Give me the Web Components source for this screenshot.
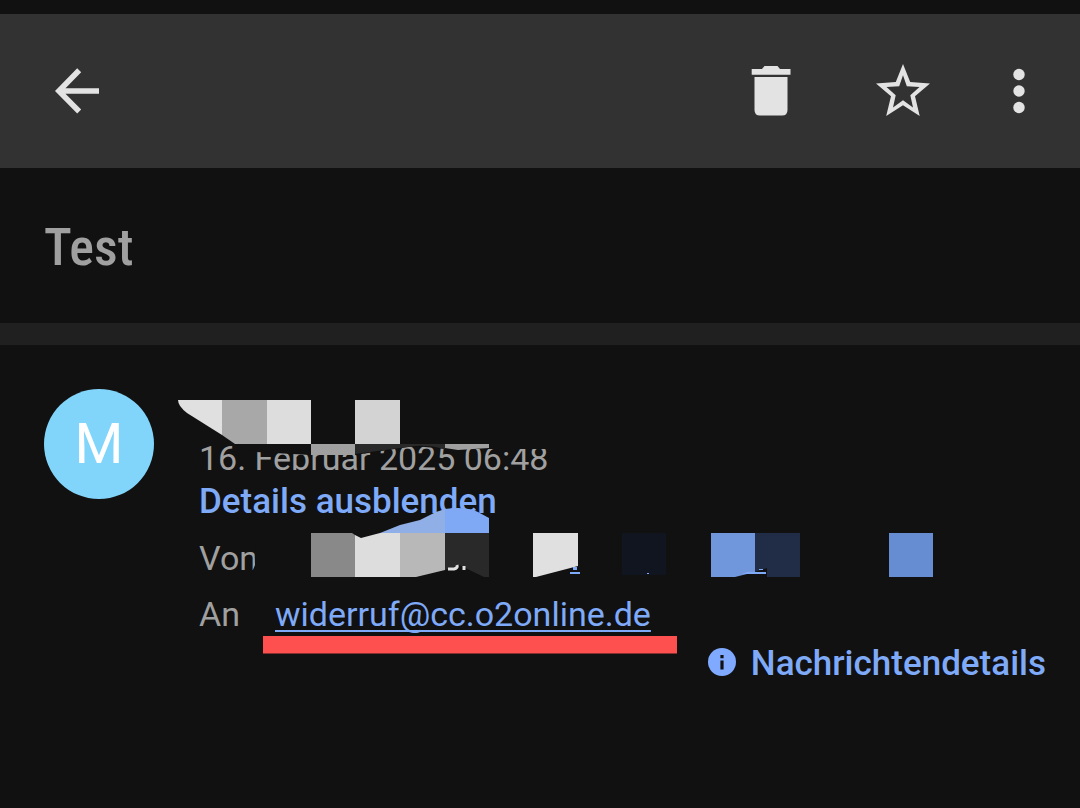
<!DOCTYPE html>
<html lang="de">
<head>
<meta charset="utf-8">
<meta name="viewport" content="width=device-width, initial-scale=1">
<title>Test</title>
<style>
body { margin: 0; background: #111; color: #a0a0a0; font-family: Roboto, "Liberation Sans", sans-serif; }
</style>
</head>
<body>
<mail-page>
  <mail-toolbar slot="bar"></mail-toolbar>
  <mail-subject slot="subject">Test</mail-subject>
  <mail-message initial="M">
    <span slot="date">16. Februar 2025 06:48</span>
    <a slot="to" href="mailto:widerruf@cc.o2online.de">widerruf@cc.o2online.de</a>
  </mail-message>
</mail-page>
<script>
const define = (name, html) => customElements.define(name, class extends HTMLElement {
  constructor() {
    super();
    this.attachShadow({ mode: 'open' }).innerHTML = html;
  }
  connectedCallback() {
    const initial = this.shadowRoot.querySelector('.initial');
    if (initial) initial.textContent = this.getAttribute('initial');
  }
});

define('mail-page', `
<style>
:host { display: flex; flex-direction: column; min-height: 100vh; padding-top: 14px; box-sizing: border-box; background: #111; }
main { display: block; }
</style>
<slot name="bar"></slot>
<main><slot name="subject"></slot><slot></slot></main>`);

define('mail-toolbar', `
<style>
:host { display: block; background: #323232; }
header { display: flex; align-items: center; height: 154px; padding: 0 29px 0 45px; }
button { width: 64px; height: 64px; padding: 0; border: 0; background: none; color: #e3e3e3; display: grid; place-items: center; }
svg { width: 64px; height: 64px; fill: currentColor; display: block; }
nav { display: flex; align-items: center; gap: 68px; margin-left: auto; }
nav button:last-child { margin-left: -16px; }
</style>
<header>
  <button aria-label="Zurück"><svg viewBox="0 0 64 64"><path d="M54 29.200H20.500L36.200 13.300 32.200 9.300 10 32 32.200 54.500 36.200 50.500 20.500 34.800H54Z"/></svg></button>
  <nav>
    <button aria-label="Löschen"><svg viewBox="0 0 64 64"><path d="M12.700 10H23L25.500 7H38.500L41 10H51.500V15.800H12.700ZM15.500 18H48.500V51Q48.500 56.500 43 56.500H21Q15.500 56.500 15.500 51Z"/></svg></button>
    <button aria-label="Markieren"><svg viewBox="0 0 64 64"><path fill-rule="evenodd" d="M32 5 39.200 23 59 24.500 44 37.300 48.700 57 32 46.300 15.200 57 20 37.300 5 24.500 24.800 23ZM32 16.200 28.200 27.200 15.500 28 24.700 36.300 22 48.600 32 41.300 42 48.600 39.300 36.300 48.500 28 35.800 27.200Z"/></svg></button>
    <button aria-label="Weitere Optionen"><svg viewBox="0 0 64 64"><circle cx="32" cy="15.500" r="5.700"/><circle cx="32" cy="32" r="5.700"/><circle cx="32" cy="48.500" r="5.700"/></svg></button>
  </nav>
</header>`);

define('mail-subject', `
<style>
:host { display: block; border-bottom: 22px solid #202020; }
h1 { margin: 0; padding: 50px 44px 45px; font: 500 52px/60px "Roboto Condensed", Roboto, sans-serif; }
</style>
<h1><slot></slot></h1>`);

define('mail-message', `
<style>
:host { display: block; position: relative; overflow: hidden; font-size: 34px; line-height: 44px; }
article { display: grid; grid-template-columns: 110px minmax(0, 1fr); column-gap: 45px; padding: 44px 34px 44px 44px; }
.initial { width: 110px; height: 110px; border-radius: 50%; background: #81d4fa; color: #fff; font-size: 56px; line-height: 110px; text-align: center; }
.name { height: 47px; }
.date, ::slotted(span) { display: block; }
button { display: block; border: 0; padding: 0; background: none; color: #7faaf8; font: 500 35px/44px Roboto, sans-serif; }
dl { display: grid; grid-template-columns: 76px minmax(0, 1fr); grid-auto-rows: 56px; line-height: 56px; margin: 6px 0 0; }
dd { margin: 0; }
::slotted(a) { color: #7faaf8; text-decoration-thickness: 2px; text-underline-offset: 4px; text-decoration-skip-ink: none; }
button.info { display: flex; align-items: center; gap: 15px; margin-left: auto; }
.info svg { width: 28px; height: 28px; display: block; margin-bottom: 4px; }
.marks { position: absolute; left: 0; top: 0; width: 1080px; height: 320px; pointer-events: none; }
</style>
<article>
  <div class="initial"></div>
  <div>
    <div class="name"></div>
    <div class="date"><slot name="date"></slot></div>
    <button>Details ausblenden</button>
    <dl><dt>Von</dt><dd></dd><dt>An</dt><dd><slot name="to"></slot></dd></dl>
    <button class="info"><svg viewBox="0 0 28 28"><circle cx="14" cy="14" r="14" fill="#7faaff"/><path fill="#111" d="M12.400 7h3.200v3.200h-3.200zM12.400 12.500h3.200v9h-3.200z"/></svg>Nachrichtendetails</button>
  </div>
</article>
<svg class="marks" viewBox="0 345 1080 320" aria-hidden="true">
  <path fill="#111" d="M235 444H311L560 444V449H490L445 449 415 446 355 455H311L256 452Z"/>
  <path fill="#e0e0e0" d="M178 400H222V435L187 413Q178 406 178 400Z"/>
  <path fill="#a8a8a8" d="M222 400H267V444H235L222 435Z"/>
  <path fill="#ddd" d="M267 400H311V444H267Z"/>
  <path fill="#d3d3d3" d="M355 400H400V444H355Z"/>
  <path fill="#a0a0a0" d="M311 444H355V455H311Z"/>
  <path fill="#292929" d="M355 444H445V449Q430 445 415 446L385 450 355 454Z"/>
  <path fill="#a0a0a0" d="M445 444H489V448L458 450 445 448Z"/>
  <path fill="#90afe6" d="M380 533 400 525 420 520 436 512 445 509V533Z"/>
  <path fill="#7fa8f5" d="M445 509Q466 506 478 512L489 518V533H445Z"/>
  <path fill="#111" d="M254 533H311V577H250L255 565Z"/>
  <path fill="#898989" d="M311 533H352L355 535V577H311Z"/>
  <path fill="#ddd" d="M355 535 361 538 380 533H400V577H355Z"/>
  <path fill="#b8b8b8" d="M400 533H445V570L416 577H400Z"/>
  <path fill="#292929" d="M445 533H489V577H484L459 565 445 570Z"/>
  <path fill="none" stroke="#e0e0e0" stroke-width="3" d="M448 569H454Q458 568 457 565M464 566V570"/>
  <path fill="#e0e0e0" d="M533 533H578V566L536 577H533Z"/>
  <path fill="#7faaf8" d="M573 567H577V570H573ZM570 572H580V574H570Z"/>
  <path fill="#11151f" d="M622 533H666V575H622Z"/>
  <path fill="#7faaf8" d="M647 573H649V574H647Z"/>
  <path fill="#7096dc" d="M711 533H755V572L735 577H711Z"/>
  <path fill="#212c46" d="M755 533H800V577H767V568L755 572Z"/>
  <path fill="#7faaf8" d="M747 572H766V574H742ZM759 569H763V570H759Z"/>
  <path fill="#668dd2" d="M889 533H933V577H889Z"/>
  <path fill="#ff5050" d="M263 636H677V653.500H263Z"/>
</svg>`);
</script>
</body>
</html>
